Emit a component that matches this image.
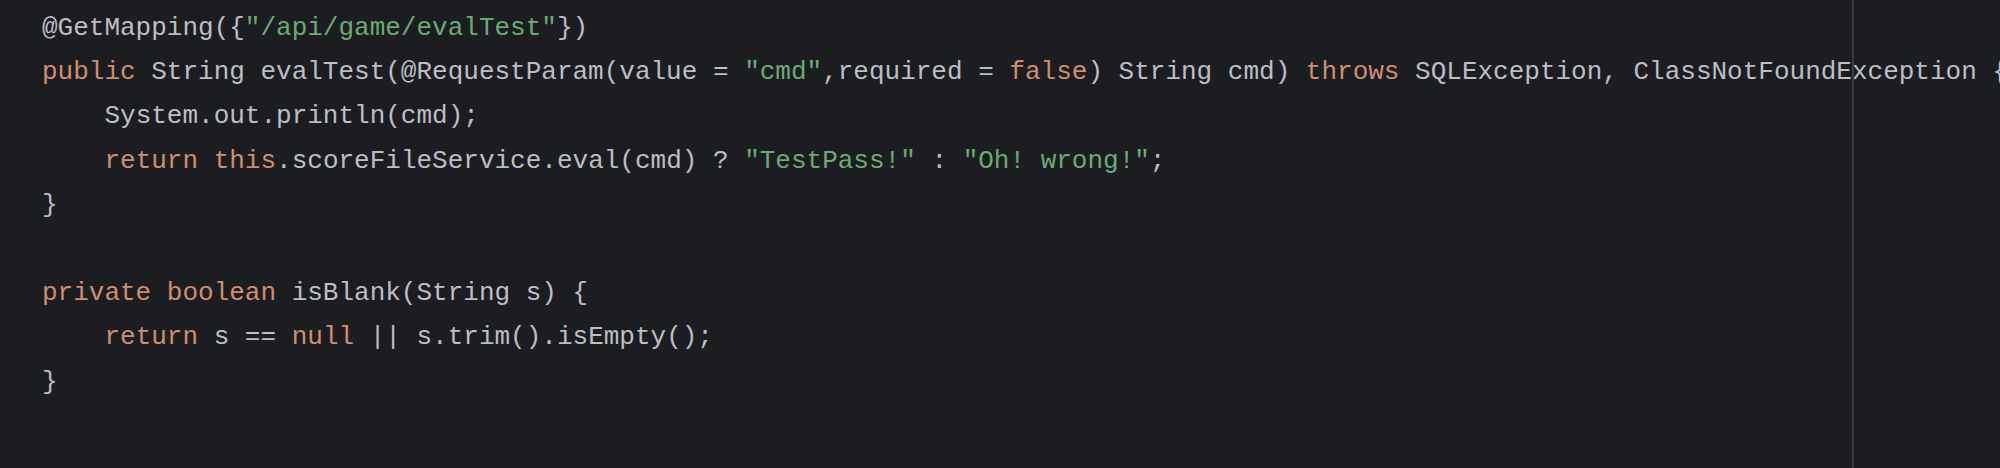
import React from "react";

const K = ({ children }: { children: React.ReactNode }) => (
  <span className="text-[#cf8e6d]">{children}</span>
);
const S = ({ children }: { children: React.ReactNode }) => (
  <span className="text-[#6aab73]">{children}</span>
);

export default function App() {
  return (
    <div className="relative h-[468px] w-full overflow-hidden bg-[#1c1d20]">
      <div
        className="pl-[42px] pt-[6px] text-[26px] leading-[44.2px] whitespace-pre text-[#bcbec4]"
        style={{ fontFamily: '"Liberation Mono", "DejaVu Sans Mono", monospace' }}
      >
        <div>
          @GetMapping({"{"}
          <S>"/api/game/evalTest"</S>
          {"})"}
        </div>
        <div>
          <K>public</K> String evalTest(@RequestParam(value = <S>"cmd"</S>,required ={" "}
          <K>false</K>) String cmd) <K>throws</K> SQLException, ClassNotFoundException {"{"}
        </div>
        <div>{"    "}System.out.println(cmd);</div>
        <div>
          {"    "}
          <K>return</K> <K>this</K>.scoreFileService.eval(cmd) ? <S>"TestPass!"</S> :{" "}
          <S>"Oh! wrong!"</S>;
        </div>
        <div>{"}"}</div>
        <div>{" "}</div>
        <div>
          <K>private</K> <K>boolean</K> isBlank(String s) {"{"}
        </div>
        <div>
          {"    "}
          <K>return</K> s == <K>null</K> || s.trim().isEmpty();
        </div>
        <div>{"}"}</div>
      </div>
      <div className="absolute left-[1852px] top-0 h-full w-[2px] bg-[#393b40]" />
    </div>
  );
}
